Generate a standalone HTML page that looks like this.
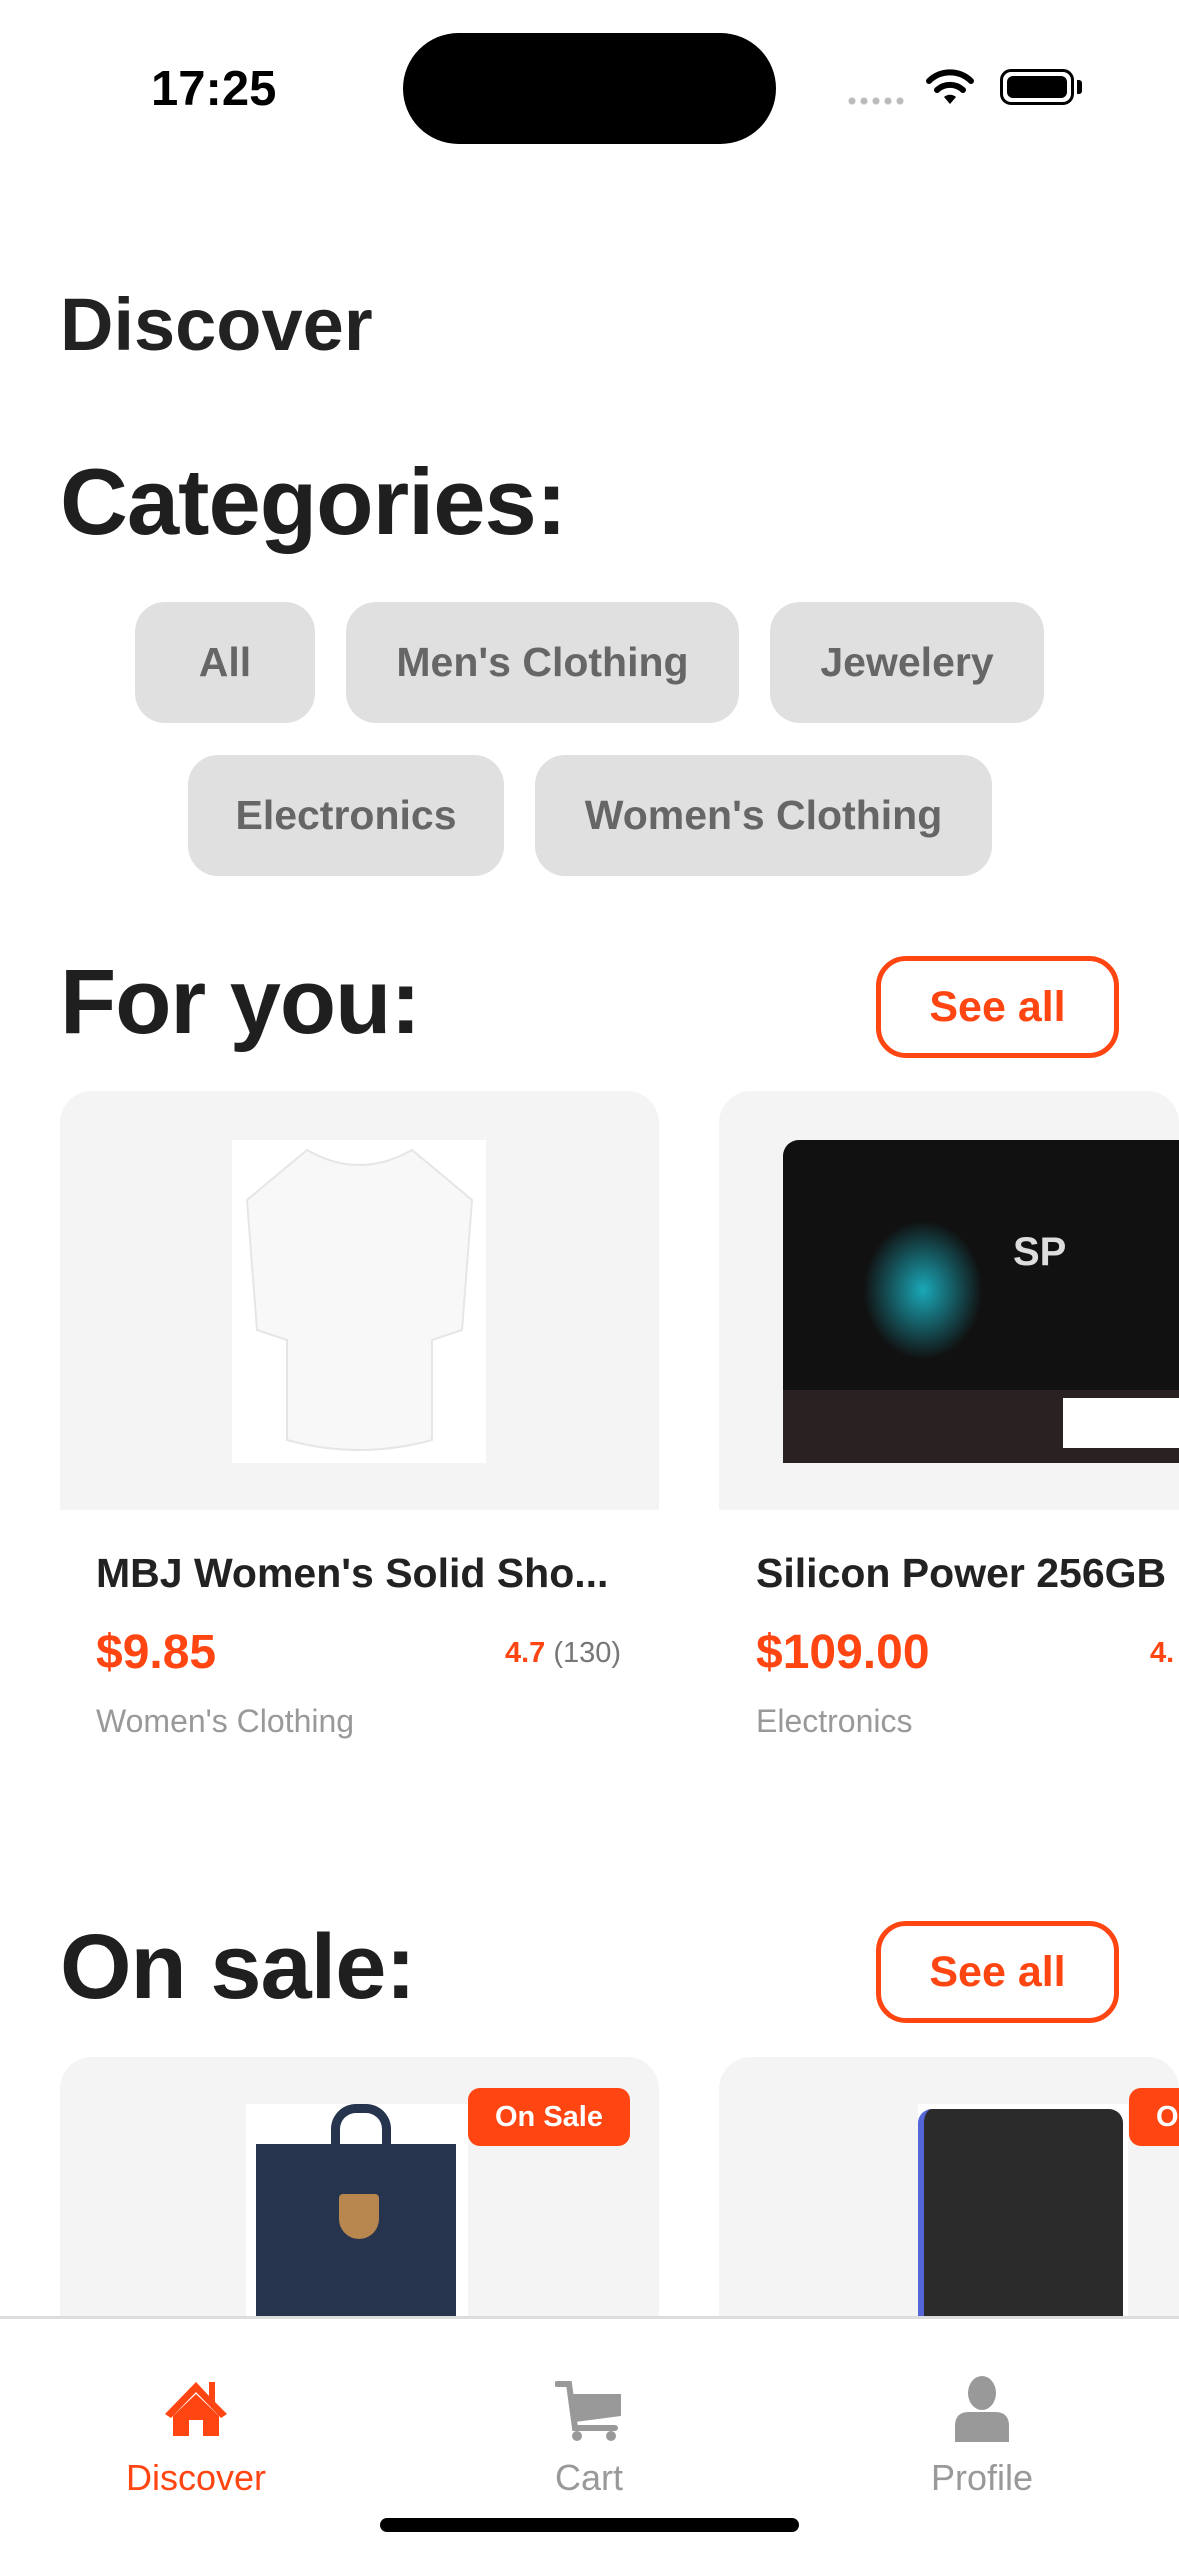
<!DOCTYPE html>
<html><head><meta charset="utf-8"><style>
*{margin:0;padding:0;box-sizing:border-box}
html{overflow:hidden;width:1179px;height:2556px}
body{width:1179px;height:2556px;overflow:hidden;background:#fff;font-family:"Liberation Sans",Arial,sans-serif;position:relative;color:#222}
.a{position:absolute}
.chip{position:absolute;background:#e0e0e0;border-radius:30px;color:#666;font-weight:bold;font-size:41px;display:flex;align-items:center;justify-content:center;height:121px}
.h{position:absolute;left:60px;font-weight:bold;font-size:92px;color:#1f1f1f;letter-spacing:-1px}
.see{position:absolute;left:876px;width:243px;height:102px;border:5px solid #ff4511;border-radius:30px;color:#ff4511;font-weight:bold;font-size:43px;display:flex;align-items:center;justify-content:center}
.card{position:absolute;width:599px;height:419px;background:#f4f4f4;border-radius:32px 32px 0 0;overflow:hidden}
.t{position:absolute;font-size:41px;font-weight:bold;color:#222;white-space:nowrap}
.p{position:absolute;font-size:48px;font-weight:bold;color:#ff4511}
.c{position:absolute;font-size:32px;color:#999}
.badge{position:absolute;background:#ff4511;color:#fff;font-weight:bold;font-size:29px;border-radius:12px;height:58px;display:flex;align-items:center;justify-content:center}
.tab{position:absolute;font-size:36px;text-align:center;width:240px}
</style></head><body>
<div class="a" style="left:151px;top:61px;font-size:49px;font-weight:bold;color:#000">17:25</div>
<div class="a" style="left:403px;top:33px;width:373px;height:111px;background:#000;border-radius:56px"></div>
<div class="a" style="left:846px;top:97px;width:59px;height:8px;background:radial-gradient(circle,#bbb 3px,transparent 4px) 0 0/12px 8px repeat-x"></div>
<svg class="a" style="left:925px;top:68px" width="50" height="38" viewBox="0 0 50 38"><path d="M25 36 L19 29 A9 9 0 0 1 31 29Z" fill="#000"/><path d="M12 22 A19 19 0 0 1 38 22" stroke="#000" stroke-width="6" fill="none" stroke-linecap="round"/><path d="M4 13 A30 30 0 0 1 46 13" stroke="#000" stroke-width="6" fill="none" stroke-linecap="round"/></svg>
<div class="a" style="left:1000px;top:69px;width:74px;height:36px;border:3px solid #000;border-radius:11px;padding:4px"><div style="width:100%;height:100%;background:#000;border-radius:6px"></div></div>
<div class="a" style="left:1077px;top:80px;width:5px;height:14px;background:#000;border-radius:0 3px 3px 0"></div>

<div class="a" style="left:60px;top:282px;font-size:74px;font-weight:bold;color:#222">Discover</div>
<div class="h" style="top:448px;font-size:94px">Categories:</div>
<div class="chip" style="left:135px;top:602px;width:180px">All</div>
<div class="chip" style="left:346px;top:602px;width:393px">Men's Clothing</div>
<div class="chip" style="left:770px;top:602px;width:274px">Jewelery</div>
<div class="chip" style="left:188px;top:755px;width:316px">Electronics</div>
<div class="chip" style="left:535px;top:755px;width:457px">Women's Clothing</div>

<div class="h" style="top:950px">For you:</div>
<div class="see" style="top:956px">See all</div>
<div class="card" style="left:60px;top:1091px"><div class="a" style="left:172px;top:49px;width:254px;height:323px;background:#fff"><svg width="254" height="323" viewBox="0 0 254 323"><path d="M75 10 Q127 40 180 10 L240 60 L230 190 L200 200 L200 300 Q127 320 55 300 L55 200 L25 190 L15 60Z" fill="#f8f8f8" stroke="#e6e6e6" stroke-width="2"/></svg></div></div>
<div class="card" style="left:719px;top:1091px;width:460px"><div class="a" style="left:64px;top:49px;width:560px;height:323px;background:#111;border-radius:16px"><div class="a" style="left:0;top:250px;width:100%;height:73px;background:#2a2222"></div><div class="a" style="left:280px;top:258px;width:200px;height:50px;background:#fff"></div><div class="a" style="left:230px;top:90px;font-size:40px;font-weight:bold;color:#ddd">SP</div><div class="a" style="left:80px;top:80px;width:120px;height:140px;background:radial-gradient(#1aa8b8 0,transparent 70%)"></div></div></div>
<div class="t" style="left:96px;top:1550px">MBJ Women's Solid Sho...</div>
<div class="p" style="left:96px;top:1625px">$9.85</div>
<div class="a" style="left:505px;top:1637px;font-size:29px"><b style="color:#ff4511">4.7</b> <span style="color:#777">(130)</span></div>
<div class="c" style="left:96px;top:1703px">Women's Clothing</div>
<div class="t" style="left:756px;top:1550px">Silicon Power 256GB</div>
<div class="p" style="left:756px;top:1625px">$109.00</div>
<div class="a" style="left:1150px;top:1637px;font-size:29px"><b style="color:#ff4511">4.</b></div>
<div class="c" style="left:756px;top:1703px">Electronics</div>

<div class="h" style="top:1915px">On sale:</div>
<div class="see" style="top:1921px">See all</div>
<div class="card" style="left:60px;top:2057px;height:270px"><div class="a" style="left:186px;top:47px;width:222px;height:230px;background:#fff"><div class="a" style="left:10px;top:40px;width:200px;height:200px;background:#26344d"></div><div class="a" style="left:85px;top:0;width:60px;height:50px;border:9px solid #26344d;border-bottom:none;border-radius:25px 25px 0 0"></div><div class="a" style="left:93px;top:90px;width:40px;height:45px;background:#b8874f;border-radius:4px 4px 20px 20px"></div></div><div class="badge" style="left:408px;top:31px;width:162px">On Sale</div></div>
<div class="card" style="left:719px;top:2057px;height:270px;width:460px"><div class="a" style="left:199px;top:47px;width:210px;height:230px;background:#fff"><div class="a" style="left:0;top:5px;width:205px;height:230px;background:#2b2b2b;border-left:6px solid #5566d8;border-radius:14px 14px 0 0"></div></div><div class="badge" style="left:410px;top:31px;width:162px">On Sale</div></div>

<div class="a" style="left:0;top:2316px;width:1179px;height:240px;background:#fff;border-top:3px solid #ddd"></div>
<svg class="a" style="left:163px;top:2380px" width="66" height="56" viewBox="0 0 66 56"><path d="M33 2 L2 34 L8 38 L33 12 L58 38 L64 34 L52 22 L52 2 L46 2 L46 16Z" fill="#ff4511"/><path d="M10 36 L33 14 L56 36 L56 56 L40 56 L40 40 L26 40 L26 56 L10 56Z" fill="#ff4511"/></svg>
<svg class="a" style="left:555px;top:2380px" width="68" height="62" viewBox="0 0 68 62"><path d="M2 4 L14 4 L20 48 L60 48" stroke="#999" stroke-width="6" fill="none" stroke-linecap="round"/><path d="M16 14 L66 14 L66 36 L20 42Z" fill="#999"/><circle cx="22" cy="56" r="5" fill="#999"/><circle cx="56" cy="56" r="5" fill="#999"/></svg>
<svg class="a" style="left:955px;top:2376px" width="54" height="66" viewBox="0 0 54 66"><ellipse cx="27" cy="17" rx="14" ry="17" fill="#999"/><path d="M0 66 L0 50 Q0 36 14 36 L40 36 Q54 36 54 50 L54 66Z" fill="#999"/></svg>
<div class="tab" style="left:76px;top:2457px;color:#ff4511">Discover</div>
<div class="tab" style="left:469px;top:2457px;color:#999">Cart</div>
<div class="tab" style="left:862px;top:2457px;color:#999">Profile</div>
<div class="a" style="left:380px;top:2518px;width:419px;height:14px;background:#000;border-radius:7px"></div>
</body></html>
